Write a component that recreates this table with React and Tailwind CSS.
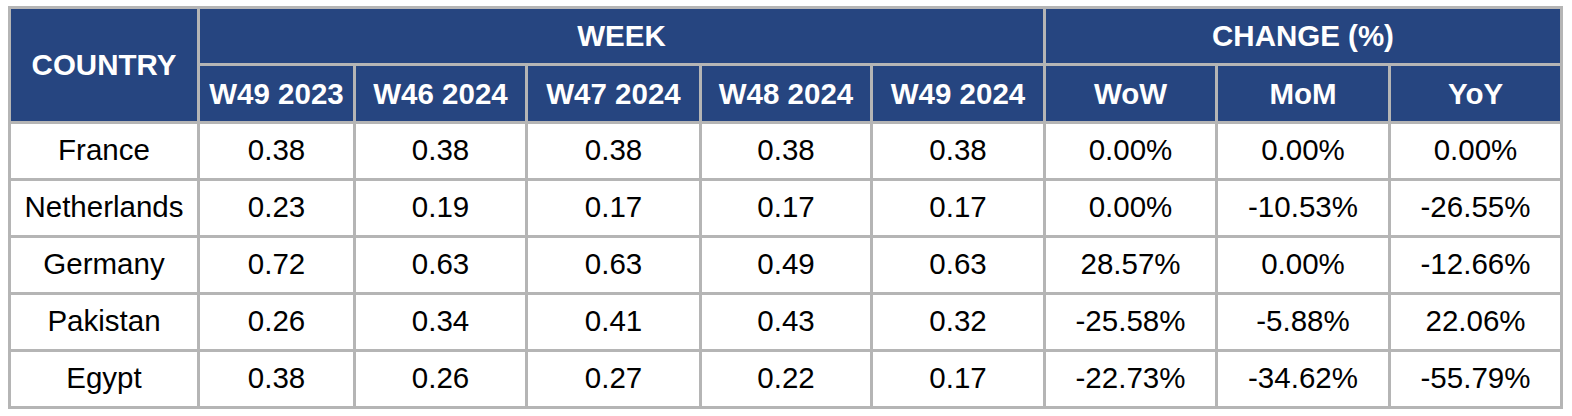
import React from "react";

const weeks = ["W49 2023", "W46 2024", "W47 2024", "W48 2024", "W49 2024"];
const changes = ["WoW", "MoM", "YoY"];
const rows = [
  ["France", "0.38", "0.38", "0.38", "0.38", "0.38", "0.00%", "0.00%", "0.00%"],
  ["Netherlands", "0.23", "0.19", "0.17", "0.17", "0.17", "0.00%", "-10.53%", "-26.55%"],
  ["Germany", "0.72", "0.63", "0.63", "0.49", "0.63", "28.57%", "0.00%", "-12.66%"],
  ["Pakistan", "0.26", "0.34", "0.41", "0.43", "0.32", "-25.58%", "-5.88%", "22.06%"],
  ["Egypt", "0.38", "0.26", "0.27", "0.22", "0.17", "-22.73%", "-34.62%", "-55.79%"],
];

const head = "bg-[#264580] text-white font-bold flex items-center justify-center";
const cell = "bg-white text-black flex items-center justify-center pb-[2px]";

export default function App() {
  return (
    <div className="bg-white w-[1572px] h-[416px] pl-[8px] pt-[6px]" style={{ fontFamily: '"Liberation Sans", Arial, sans-serif' }}>
      <div className="grid w-[1555px] bg-[#b5b5b5] p-[3px] gap-[3px] text-[29.5px] leading-none grid-cols-[186px_153px_169px_171px_168px_170px_169px_170px_169px] grid-rows-[54px_55px_54px_54px_54px_54px_54px]">
        <div className={`${head} row-span-2`}>COUNTRY</div>
        <div className={`${head} col-span-5`}>WEEK</div>
        <div className={`${head} col-span-3`}>CHANGE (%)</div>
        {weeks.map((w) => (
          <div key={w} className={head}>{w}</div>
        ))}
        {changes.map((c) => (
          <div key={c} className={head}>{c}</div>
        ))}
        {rows.map((r) =>
          r.map((v, i) => (
            <div key={r[0] + i} className={cell}>{v}</div>
          ))
        )}
      </div>
    </div>
  );
}
